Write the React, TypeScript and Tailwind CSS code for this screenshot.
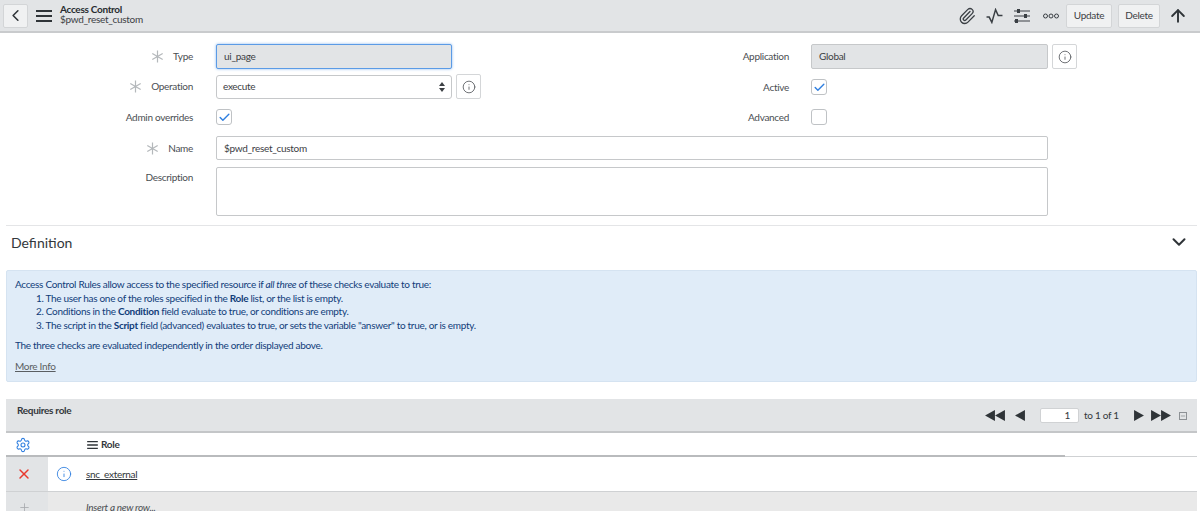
import React from 'react';
import { ChevronLeft, ChevronDown, ArrowUp, Paperclip, Settings, X, Plus, Info, Check, Minus } from 'lucide-react';

const Star = () => (
  <svg viewBox="0 0 14 14" className="w-[13px] h-[13px] text-[#b4b8bb]" fill="none" stroke="currentColor" strokeWidth="1.3">
    <path d="M7 0.5V13.5M1.4 3.75L12.6 10.25M12.6 3.75L1.4 10.25" />
  </svg>
);

const Burger = ({ className }: { className: string }) => (
  <svg viewBox="0 0 16 12" className={className} fill="currentColor">
    <path d="M0 0H16V2H0ZM0 5H16V7H0ZM0 10H16V12H0Z" />
  </svg>
);

const Label = ({ text, required, width }: { text: string; required?: boolean; width: string }) => (
  <div className={`${width} shrink-0 flex items-center justify-end gap-[9px] text-[#4a4e52]`}>
    {required && <Star />}
    <span>{text}</span>
  </div>
);

const InfoBtn = () => (
  <button className="w-[25px] h-[25px] shrink-0 rounded-[2px] border border-[#d4d6d8] bg-white flex items-center justify-center text-[#5b5f63]">
    <Info size={14} strokeWidth={1.5} />
  </button>
);

const Checkbox = ({ checked }: { checked?: boolean }) => (
  <div className="w-[16px] h-[16px] rounded-[3px] border border-[#bfc2c5] bg-white flex items-center justify-center">
    {checked && <Check size={13} strokeWidth={2.6} className="text-[#2f7fe0]" />}
  </div>
);

const TopIcon = ({ children }: { children: React.ReactNode }) => (
  <div className="flex items-center justify-center text-[#3a3f44]">{children}</div>
);

const Triangle = ({ dir }: { dir: 'l' | 'r' }) => (
  <svg viewBox="0 0 9 10" className="w-[10px] h-[11px]" fill="#2f3438">
    <path d={dir === 'l' ? 'M9 0V10L0 5Z' : 'M0 0V10L9 5Z'} />
  </svg>
);

export default function App() {
  return (
    <div className="w-[1200px] h-[511px] overflow-hidden bg-white text-[10px] tracking-[-0.3px] leading-[13px] text-[#3c4044] font-['Lato','Noto_Sans',sans-serif]">
      {/* title bar */}
      <header className="h-[33px] bg-[#e2e4e6] border-b-2 border-[#c9cbcd] flex items-center pl-[3px] overflow-hidden">
        <button className="w-[25px] h-[24px] rounded-[2px] border border-[#d3d5d7] bg-[#f0f1f2] flex items-center justify-center text-[#2f3438]">
          <ChevronLeft size={19} strokeWidth={2} />
        </button>
        <Burger className="ml-[8px] w-[16px] h-[12px] text-[#2f3438]" />
        <div className="ml-[8px] leading-[10.5px] text-[10px] -mt-[3px]">
          <div className="font-bold text-[#272b2f]">Access Control</div>
          <div className="text-[#3c4044]">$pwd_reset_custom</div>
        </div>
        <div className="ml-auto flex items-center shrink-0 -mr-[17px]">
          <TopIcon><Paperclip size={18} strokeWidth={1.7} /></TopIcon>
          <TopIcon>
            <svg viewBox="0 0 16 14" className="w-[17px] h-[16px] ml-[10px]" fill="none" stroke="currentColor" strokeWidth="1.4">
              <path d="M0.5 8H3L5.5 13L9 1L11.5 6.5H15.5" />
            </svg>
          </TopIcon>
          <TopIcon>
            <svg viewBox="0 0 16 16" className="w-[16px] h-[16px] ml-[11px]" fill="currentColor">
              <path d="M0 2.5H16V3.5H0ZM0 7.5H16V8.5H0ZM0 12.5H16V13.5H0Z" />
              <rect x="3" y="1" width="3" height="4" /><rect x="10" y="6" width="3" height="4" /><rect x="1" y="11" width="3" height="4" />
            </svg>
          </TopIcon>
          <TopIcon>
            <svg viewBox="0 0 16 6" className="w-[16px] h-[6px] ml-[13px]" fill="none" stroke="currentColor" strokeWidth="1">
              <circle cx="2.5" cy="3" r="2" /><circle cx="8" cy="3" r="2" /><circle cx="13.5" cy="3" r="2" />
            </svg>
          </TopIcon>
          <button className="ml-[7px] h-[24px] w-[46px] rounded-[2px] border border-[#d3d5d7] bg-[#f0f1f2] text-[#3c4044]">Update</button>
          <button className="ml-[6px] h-[24px] w-[42px] rounded-[2px] border border-[#d3d5d7] bg-[#f0f1f2] text-[#3c4044]">Delete</button>
          <ArrowUp size={20} strokeWidth={2.3} className="ml-[8px] text-[#2f3438]" />
          <ChevronDown size={20} strokeWidth={2.3} className="ml-[9px] text-[#2f3438]" />
        </div>
      </header>

      {/* form */}
      <section className="pt-[11px] flex flex-col">
        <div className="flex">
          <div className="w-[600px] flex flex-col">
            <div className="flex items-center h-[25px] gap-[23px]">
              <Label text="Type" required width="w-[193px]" />
              <div className="w-[236px] h-[25px] rounded-[2px] border border-[#5b9be6] bg-[#e2e4e6] shadow-[0_0_3px_#8ab8ee] pl-[7px] flex items-center">ui_page</div>
            </div>
            <div className="flex items-center h-[25px] gap-[23px] mt-[5px]">
              <Label text="Operation" required width="w-[193px]" />
              <div className="w-[236px] h-[24px] rounded-[3px] border border-[#c6c8ca] bg-white px-[6px] flex items-center justify-between">
                <span>execute</span>
                <svg viewBox="0 0 6 10" className="w-[6px] h-[10px]" fill="#3c4044"><path d="M3 0L6 4H0ZM3 10L0 6H6Z" /></svg>
              </div>
              <div className="-ml-[19px]"><InfoBtn /></div>
            </div>
            <div className="flex items-center h-[18px] gap-[23px] mt-[9px]">
              <Label text="Admin overrides" width="w-[193px]" />
              <Checkbox checked />
            </div>
          </div>
          <div className="flex-1 flex flex-col">
            <div className="flex items-center h-[25px] gap-[22px]">
              <Label text="Application" width="w-[189px]" />
              <div className="w-[237px] h-[25px] rounded-[2px] border border-[#c6c8ca] bg-[#e2e4e6] pl-[7px] flex items-center">Global</div>
              <div className="-ml-[18px]"><InfoBtn /></div>
            </div>
            <div className="flex items-center h-[18px] gap-[22px] mt-[9px]">
              <Label text="Active" width="w-[189px]" />
              <Checkbox checked />
            </div>
            <div className="flex items-center h-[18px] gap-[22px] mt-[12px]">
              <Label text="Advanced" width="w-[189px]" />
              <Checkbox />
            </div>
          </div>
        </div>
        <div className="flex items-center h-[24px] gap-[23px] mt-[10px]">
          <Label text="Name" required width="w-[193px]" />
          <div className="w-[832px] h-[24px] rounded-[2px] border border-[#c6c8ca] bg-white pl-[7px] flex items-center">$pwd_reset_custom</div>
        </div>
        <div className="flex items-start gap-[23px] mt-[7px]">
          <div className="pt-[4px]"><Label text="Description" width="w-[193px]" /></div>
          <div className="w-[832px] h-[49px] rounded-[2px] border border-[#c6c8ca] bg-white" />
        </div>
      </section>

      {/* definition */}
      <div className="mt-[9px] ml-[6px] mr-[3px] border-t border-[#e4e5e7] h-[33px] flex items-center justify-between pl-[5px] pr-[7px]">
        <span className="text-[14px] tracking-normal text-[#33373b]">Definition</span>
        <ChevronDown size={22} strokeWidth={2.2} className="text-[#2f3438]" />
      </div>

      {/* info */}
      <div className="mt-[12px] ml-[6px] mr-[3px] h-[112px] rounded-[2px] border border-[#d5e3f1] bg-[#e0ecf8] pl-[8px] pt-[7px] leading-[13.7px] text-[#103d7a]">
        <p>Access Control Rules allow access to the specified resource if <em>all three</em> of these checks evaluate to true:</p>
        <ol className="pl-[21px]">
          <li>1. The user has one of the roles specified in the <b>Role</b> list, or the list is empty.</li>
          <li>2. Conditions in the <b>Condition</b> field evaluate to true, or conditions are empty.</li>
          <li>3. The script in the <b>Script</b> field (advanced) evaluates to true, or sets the variable "answer" to true, or is empty.</li>
        </ol>
        <p className="mt-[6px]">The three checks are evaluated independently in the order displayed above.</p>
        <p className="mt-[7px]"><a className="underline text-[#5a5e62]">More Info</a></p>
      </div>

      {/* related list */}
      <div className="mt-[17px] ml-[6px] mr-[3px]">
        <div className="h-[34px] bg-[#e2e4e6] border-b-2 border-[#c4c6c8] flex items-start pl-[11px] pr-[10px]">
          <span className="mt-[5px] font-bold text-[#33373b]">Requires role</span>
          <div className="ml-auto mt-[9px] flex items-center text-[#33373b]">
            <Triangle dir="l" /><Triangle dir="l" />
            <div className="w-[10px]" />
            <Triangle dir="l" />
            <div className="ml-[15px] w-[39px] h-[15px] rounded-[2px] border border-[#d0d2d4] bg-white text-right pr-[8px] leading-[13px]">1</div>
            <span className="ml-[5px] w-[35px] whitespace-nowrap">to 1 of 1</span>
            <div className="ml-[15px]"><Triangle dir="r" /></div>
            <div className="ml-[7px] flex"><Triangle dir="r" /><Triangle dir="r" /></div>
            <div className="ml-[8px] w-[8px] h-[8px] border border-[#8d9195] flex items-center justify-center"><Minus size={6} strokeWidth={1.5} /></div>
          </div>
        </div>
        <div className="h-[24px] flex items-center border-b border-[#cfd1d3] relative">
          <Settings size={16} strokeWidth={1.6} className="ml-[9px] text-[#2f7fe0]" />
          <Burger className="ml-[56px] w-[11px] h-[8px] text-[#2f3438]" />
          <span className="ml-[3px] font-bold text-[#33373b]">Role</span>
          <div className="absolute left-0 bottom-[-1px] w-[1059px] h-[2px] bg-[#b9bbbd]" />
        </div>
        <div className="h-[35px] flex items-stretch border-b border-[#cfd1d3]">
          <div className="w-[42px] bg-[#e2e4e6] flex items-center pl-[10px] text-[#e8392e]"><X size={16} strokeWidth={2.2} /></div>
          <div className="flex items-center">
            <Info size={16} strokeWidth={1.3} className="ml-[8px] text-[#2f7fe0]" />
            <a className="ml-[14px] underline text-[#33373b]">snc_external</a>
          </div>
        </div>
        <div className="h-[30px] flex items-stretch bg-[#e9e9e9]">
          <div className="w-[42px] bg-[#e2e4e6] flex items-center pl-[12px] text-[#a6a9ac]"><Plus size={13} strokeWidth={1.5} /></div>
          <span className="ml-[38px] mt-[9px] italic text-[#4a4e52]">Insert a new row...</span>
        </div>
      </div>
    </div>
  );
}
